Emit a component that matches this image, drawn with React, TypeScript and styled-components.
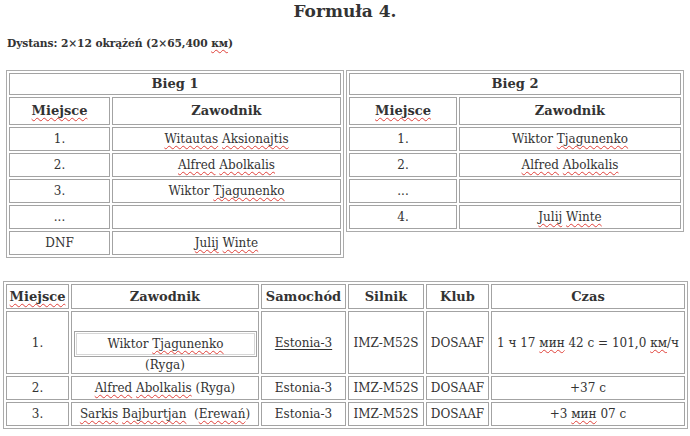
import React from 'react';
import styled, { createGlobalStyle } from 'styled-components';

const GlobalStyle = createGlobalStyle`
  html, body {
    margin: 0;
    padding: 0;
    background: #ffffff;
  }
  body {
    font-family: 'DejaVu Serif', 'Liberation Serif', serif;
    color: #333333;
  }
`;

const Page = styled.div`
  width: 690px;
  height: 436px;
  overflow: hidden;
`;

const Title = styled.h1`
  margin: 0;
  padding-top: 0;
  text-align: center;
  font-size: 17px;
  line-height: 22px;
  font-weight: bold;
  color: #333;
`;

const Distance = styled.p`
  margin: 14px 0 0 7px;
  font-size: 10.7px;
  line-height: 16px;
  font-weight: bold;
  letter-spacing: -0.1px;
`;

const Heats = styled.div`
  display: flex;
  gap: 2px;
  align-items: flex-start;
  margin: 18px 6px 0 6px;
`;

const Sheet = styled.table<{ $fixed?: boolean }>`
  flex: 1;
  border-collapse: separate;
  border-spacing: 2px;
  border: 1px solid #ababab;
  table-layout: ${p => (p.$fixed ? 'fixed' : 'auto')};
  font-size: 12px;
  color: #333;
`;

const Results = styled(Sheet)`
  width: 685px;
  margin: 23px 0 0 3px;
`;

const Head = styled.th<{ $pad: string; $w?: number }>`
  box-sizing: border-box;
  border: 1px solid #a3a3a3;
  padding: ${p => p.$pad};
  width: ${p => (p.$w ? `${p.$w}px` : 'auto')};
  font-size: 13px;
  line-height: 16px;
  font-weight: bold;
  text-align: center;
  white-space: nowrap;
`;

const Cell = styled.td<{ $pad?: string }>`
  border: 1px solid #a3a3a3;
  padding: ${p => p.$pad ?? '3px 2px'};
  line-height: 16px;
  text-align: center;
  vertical-align: middle;
  white-space: nowrap;
`;

const Err = styled.span`
  text-decoration-line: underline;
  text-decoration-style: wavy;
  text-decoration-color: #e0413a;
  text-decoration-thickness: 1px;
  text-underline-offset: 2px;
  text-decoration-skip-ink: none;
`;

const Link = styled.span`
  text-decoration: underline;
  text-underline-offset: 2px;
`;

const Inner = styled.table`
  width: 183px;
  margin: 0 auto;
  border-collapse: separate;
  border-spacing: 1px;
  border: 1px solid #a3a3a3;
  font-size: 12px;
  color: #333;
`;

const InnerCell = styled.td`
  border: 1px solid #d6d6d6;
  padding: 2px;
  line-height: 16px;
  text-align: center;
`;

type Row = { place: string; name: React.ReactNode };

const E = ({ children }: { children: string }) => (
  <>
    {children.split(' ').map((w, i) => (
      <React.Fragment key={i}>
        {i > 0 && ' '}
        <Err>{w}</Err>
      </React.Fragment>
    ))}
  </>
);

const heat1: Row[] = [
  { place: '1.', name: <E>Witautas Aksionajtis</E> },
  { place: '2.', name: <E>Alfred Abolkalis</E> },
  { place: '3.', name: <>Wiktor <Err>Tjagunenko</Err></> },
  { place: '...', name: '' },
  { place: 'DNF', name: <E>Julij Winte</E> },
];

const heat2: Row[] = [
  { place: '1.', name: <>Wiktor <Err>Tjagunenko</Err></> },
  { place: '2.', name: <E>Alfred Abolkalis</E> },
  { place: '...', name: '' },
  { place: '4.', name: <E>Julij Winte</E> },
];

const HeatTable = ({ title, rows, placeW }: { title: string; rows: Row[]; placeW: number }) => (
  <Sheet>
    <thead>
      <tr>
        <Head colSpan={2} $pad="2px">{title}</Head>
      </tr>
      <tr>
        <Head $pad="5px 2px" $w={placeW}><Err>Miejsce</Err></Head>
        <Head $pad="5px 2px">Zawodnik</Head>
      </tr>
    </thead>
    <tbody>
      {rows.map((r, i) => (
        <tr key={i}>
          <Cell>{r.place}</Cell>
          <Cell>{r.name}</Cell>
        </tr>
      ))}
    </tbody>
  </Sheet>
);

const App: React.FC = () => (
  <Page>
    <GlobalStyle />
    <Title>Formuła 4.</Title>
    <Distance>
      Dystans: 2×12 okrążeń (2×65,400 <Err>км</Err>)
    </Distance>
    <Heats>
      <HeatTable title="Bieg 1" rows={heat1} placeW={101} />
      <HeatTable title="Bieg 2" rows={heat2} placeW={108} />
    </Heats>
    <Results $fixed>
      <thead>
        <tr>
          <Head $pad="4px 2px 3px" $w={63}><Err>Miejsce</Err></Head>
          <Head $pad="4px 2px 3px" $w={188}>Zawodnik</Head>
          <Head $pad="4px 2px 3px" $w={85}>Samochód</Head>
          <Head $pad="4px 2px 3px" $w={76}>Silnik</Head>
          <Head $pad="4px 2px 3px" $w={63}>Klub</Head>
          <Head $pad="4px 2px 3px">Czas</Head>
        </tr>
      </thead>
      <tbody>
        <tr>
          <Cell>1.</Cell>
          <Cell $pad="19px 2px 0">
            <Inner>
              <tbody>
                <tr>
                  <InnerCell>Wiktor <Err>Tjagunenko</Err></InnerCell>
                </tr>
              </tbody>
            </Inner>
            <div>(Ryga)</div>
          </Cell>
          <Cell><Link>Estonia-3</Link></Cell>
          <Cell>IMZ-M52S</Cell>
          <Cell>DOSAAF</Cell>
          <Cell>1 ч 17 <Err>мин</Err> 42 с = 101,0 <Err>км</Err>/ч</Cell>
        </tr>
        <tr>
          <Cell>2.</Cell>
          <Cell><E>Alfred Abolkalis</E> (Ryga)</Cell>
          <Cell>Estonia-3</Cell>
          <Cell>IMZ-M52S</Cell>
          <Cell>DOSAAF</Cell>
          <Cell>+37 с</Cell>
        </tr>
        <tr>
          <Cell>3.</Cell>
          <Cell><E>Sarkis Bajburtjan</E>&nbsp; (<Err>Erewań</Err>)</Cell>
          <Cell>Estonia-3</Cell>
          <Cell>IMZ-M52S</Cell>
          <Cell>DOSAAF</Cell>
          <Cell>+3 <Err>мин</Err> 07 с</Cell>
        </tr>
      </tbody>
    </Results>
  </Page>
);

export default App;
